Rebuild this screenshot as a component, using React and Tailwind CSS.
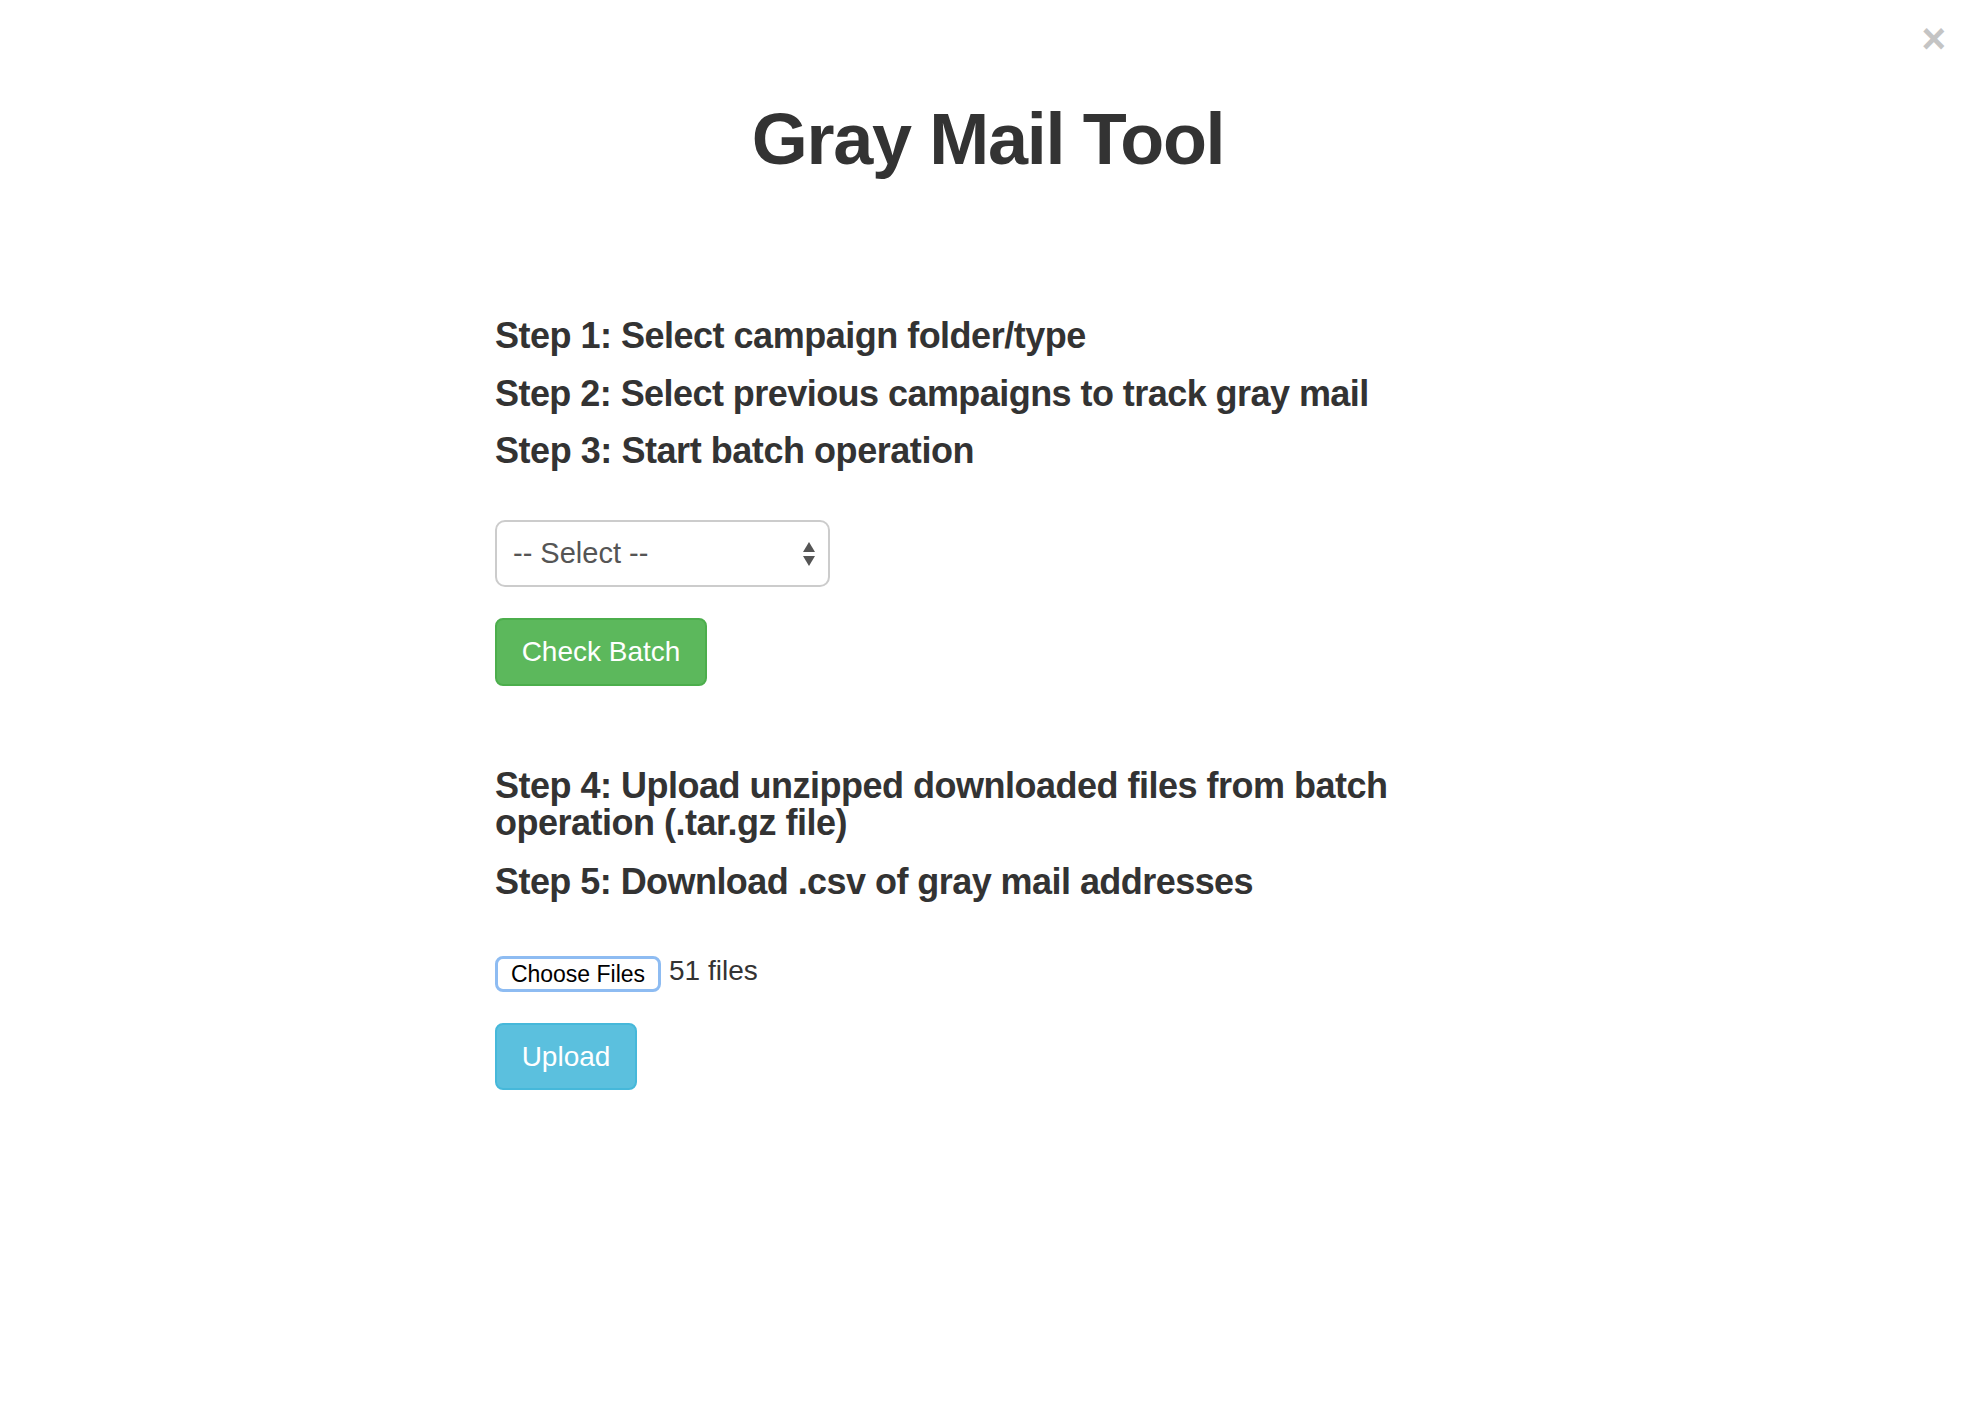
import React from 'react';

export default function App() {
  const font = { fontFamily: '"Liberation Sans", Arial, sans-serif' };

  return (
    <div className="relative min-h-[1427px] w-full bg-white pt-[100px] text-[#333]" style={font}>
      {/* close button */}
      <button className="absolute right-[30px] top-[18px] text-[42px] font-bold leading-[42px] text-[#c4c4c4]">
        ×
      </button>

      <h1 className="text-center text-[72px] font-bold leading-[79px] tracking-[-1.3px]">Gray Mail Tool</h1>

      <div className="ml-[495px] w-[1000px]">
        {/* ── Steps 1-3 ── */}
        <div className="mt-[137px] flex flex-col">
          <h4 className="text-[36px] font-bold leading-[40px] tracking-[-0.5px]">Step 1: Select campaign folder/type</h4>
          <h4 className="mt-[18px] text-[36px] font-bold leading-[40px] tracking-[-0.55px]">Step 2: Select previous campaigns to track gray mail</h4>
          <h4 className="mt-[17px] text-[36px] font-bold leading-[40px] tracking-[-0.45px]">Step 3: Start batch operation</h4>
        </div>

        <div className="mt-[49px] flex h-[67px] w-[335px] items-center justify-between rounded-[10px] border-2 border-[#ccc] bg-white pl-[16px] pr-[12px]">
          <span className="text-[29px] text-[#555]">-- Select --</span>
          <svg width="14" height="26" viewBox="0 0 14 26" className="text-[#555]">
            <path d="M7 1 L13 11 L1 11 Z" fill="currentColor" />
            <path d="M1 15 L13 15 L7 25 Z" fill="currentColor" />
          </svg>
        </div>

        <button className="mt-[31px] flex h-[68px] w-[212px] items-center justify-center rounded-[8px] border-2 border-[#4cae4c] bg-[#5cb85c] text-[28px] text-white">
          Check Batch
        </button>

        {/* ── Steps 4-5 ── */}
        <h4 className="mt-[81px] text-[36px] font-bold leading-[37px] tracking-[-0.5px]">
          Step 4: Upload unzipped downloaded files from batch
          <br />
          operation (.tar.gz file)
        </h4>
        <h4 className="mt-[21px] text-[36px] font-bold leading-[40px] tracking-[-0.55px]">Step 5: Download .csv of gray mail addresses</h4>

        <div className="mt-[54px] flex items-center gap-[8px]">
          <span className="flex h-[36px] w-[166px] items-center justify-center rounded-[8px] border-[3px] border-[#8ebcf2] bg-white text-[23px] text-black">
            Choose Files
          </span>
          <span className="-mt-[6px] text-[28px]">51 files</span>
        </div>

        <button className="mt-[31px] flex h-[67px] w-[142px] items-center justify-center rounded-[8px] border-2 border-[#46b8da] bg-[#5bc0de] text-[28px] text-white">
          Upload
        </button>
      </div>
    </div>
  );
}
